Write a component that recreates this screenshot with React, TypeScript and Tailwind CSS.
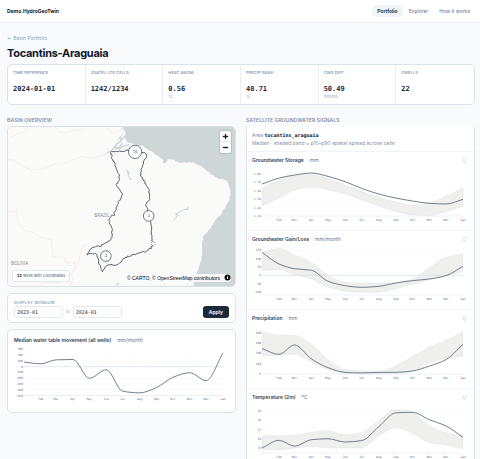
import React from "react";

type Pt = [number, number];

const MONTHS = ["Feb", "Mar", "Apr", "May", "Jun", "Jul", "Aug", "Sep", "Oct", "Nov", "Dec", "Jan"];
const DAYS = [0, 31, 59, 90, 120, 151, 181, 212, 243, 273, 304, 334, 365];

/** Monotone cubic path through the points. */
function curve(pts: Pt[], start = "M"): string {
  const n = pts.length;
  const slope: number[] = [];
  for (let i = 0; i < n - 1; i++) slope.push((pts[i + 1][1] - pts[i][1]) / (pts[i + 1][0] - pts[i][0]));
  const m = pts.map((_, i) => {
    if (i === 0) return slope[0];
    if (i === n - 1) return slope[n - 2];
    const a = slope[i - 1];
    const b = slope[i];
    return a * b <= 0 ? 0 : (2 * a * b) / (a + b);
  });
  let d = `${start}${pts[0][0]} ${pts[0][1]}`;
  for (let i = 0; i < n - 1; i++) {
    const h = (pts[i + 1][0] - pts[i][0]) / 3;
    d += `C${pts[i][0] + h} ${pts[i][1] + m[i] * h} ${pts[i + 1][0] - h} ${pts[i + 1][1] - m[i + 1] * h} ${pts[i + 1][0]} ${pts[i + 1][1]}`;
  }
  return d;
}

interface Series {
  title: string;
  unit: string;
  min: number;
  max: number;
  ticks: [number, string][];
  median: number[];
  upper?: number[];
  lower?: number[];
  zero?: boolean;
}

const axisText = "fill-[#5f7088] font-['DejaVu_Sans_Mono',monospace] text-[3px]";

function Chart({ s }: { s: Series }) {
  const left = 10;
  const right = 211;
  const top = 5;
  const bottom = 52;
  const x = (i: number) => left + (DAYS[i] / 365) * (right - left);
  const y = (v: number) => bottom - ((v - s.min) / (s.max - s.min)) * (bottom - top);
  const pts = (v: number[]): Pt[] => v.map((a, i) => [x(i), y(a)]);
  return (
    <svg viewBox="0 0 217 60" className="mt-px block w-full" role="img" aria-label={s.title}>
      {s.ticks.map(([v, label]) => (
        <g key={label}>
          <line x1={left} x2={right} y1={y(v)} y2={y(v)} stroke="#e8edf3" strokeWidth=".4" strokeDasharray="1 1" />
          <text x={left - 1} y={y(v) + 1} textAnchor="end" className={axisText}>
            {label}
          </text>
        </g>
      ))}
      {s.upper && s.lower && (
        <path d={curve(pts(s.upper)) + curve(pts(s.lower).reverse(), "L") + "Z"} fill="#efefed" stroke="#d0d4d8" strokeWidth=".4" strokeDasharray="1 .7" />
      )}
      {s.zero && <line x1={left} x2={right} y1={y(0)} y2={y(0)} stroke="#d5e0e9" strokeWidth=".7" />}
      <path d={`M${left} ${bottom}H${right}`} stroke="#dde4ec" strokeWidth=".5" />
      <path d={curve(pts(s.median))} fill="none" stroke="#64707f" strokeWidth=".9" />
      {MONTHS.map((m, i) => (
        <g key={m}>
          <line x1={x(i + 1)} x2={x(i + 1)} y1={bottom} y2={bottom + 1} stroke="#dde4ec" strokeWidth=".4" />
          <text x={x(i + 1)} y={bottom + 5} textAnchor="middle" className={axisText}>
            {m}
          </text>
        </g>
      ))}
    </svg>
  );
}

const wells: Series = {
  title: "Median water table movement (all wells)",
  unit: "mm/month",
  min: -500,
  max: 305,
  zero: true,
  ticks: [300, 200, 100, 0, -100, -200, -300, -400, -500].map((v) => [v, String(v)]),
  median: [77, 49, 117, 123, -203, -54, -426, -454, -363, -186, -106, -243, 237],
};

const signals: Series[] = [
  {
    title: "Groundwater Storage",
    unit: "mm",
    min: 1.1,
    max: 1.66,
    ticks: [[1.6, "1.6k"], [1.5, "1.5k"], [1.4, "1.4k"], [1.3, "1.3k"], [1.2, "1.2k"], [1.1, "1.1k"]],
    median: [1.481, 1.552, 1.588, 1.612, 1.572, 1.509, 1.429, 1.362, 1.314, 1.279, 1.251, 1.243, 1.298],
    upper: [1.433, 1.533, 1.576, 1.596, 1.548, 1.473, 1.394, 1.322, 1.267, 1.231, 1.259, 1.334, 1.437],
    lower: [1.219, 1.314, 1.406, 1.445, 1.413, 1.362, 1.29, 1.219, 1.152, 1.112, 1.104, 1.152, 1.215],
  },
  {
    title: "Groundwater Gain/Loss",
    unit: "mm/month",
    min: -118,
    max: 164,
    zero: true,
    ticks: [150, 100, 50, 0, -50, -100].map((v) => [v, String(v)]),
    median: [138, 68, 40, 30, -36, -62, -72, -66, -46, -32, -22, -2, 54],
    upper: [138, 162, 122, 76, 2, -42, -46, -48, -44, -22, 46, 108, 130],
    lower: [28, 34, 4, -22, -72, -94, -102, -102, -80, -54, -26, -2, 24],
  },
  {
    title: "Precipitation",
    unit: "mm",
    min: 0,
    max: 455,
    ticks: [400, 300, 200, 100, 0].map((v) => [v, String(v)]),
    median: [245, 190, 281, 145, 61, 16, 10, 16, 16, 29, 77, 139, 287],
    upper: [410, 377, 375, 287, 139, 45, 29, 26, 81, 171, 261, 326, 406],
    lower: [174, 184, 190, 113, 42, 6, 3, 3, 6, 23, 106, 152, 171],
  },
  {
    title: "Temperature (2m)",
    unit: "°C",
    min: 24.46,
    max: 29.54,
    ticks: [29, 28, 27, 26, 25].map((v) => [v, String(v)]),
    median: [25, 25.83, 25.2, 25.9, 26, 25.65, 25.8, 27.3, 28.8, 28.86, 28.06, 27.38, 26.15],
    upper: [26.33, 26.33, 26.36, 26.7, 26.87, 26.44, 26.7, 28, 29.15, 28.86, 27.4, 26.66, 26.3],
    lower: [24.82, 24.78, 25, 25.14, 25.04, 25, 25.04, 26.3, 27.2, 26.6, 25.58, 25.32, 24.9],
  },
];

const stats = [
  ["TIME REFERENCE", "2024-01-01", ""],
  ["#SATELLITE CELLS", "1242/1234", ""],
  ["HEAT ANOM.", "0.56", "°C"],
  ["PRECIP RANK", "48.71", "%"],
  ["GWS DIFF", "50.49", "mm/mo"],
  ["#WELLS", "22", ""],
];

/** Subdivides a line and shifts the midpoints, for a surveyed look. */
function rough(pts: Pt[], amp: number): string {
  let seed = 7;
  const rnd = () => {
    seed = (seed * 16807) % 2147483647;
    return seed / 2147483647 - 0.5;
  };
  let d = `M${pts[0][0]} ${pts[0][1]}`;
  for (let i = 1; i < pts.length; i++) {
    const [ax, ay] = pts[i - 1];
    const [bx, by] = pts[i];
    const n = Math.max(1, Math.round(Math.hypot(bx - ax, by - ay) / 4));
    for (let k = 1; k <= n; k++) {
      const t = k / n;
      d += `L${(ax + (bx - ax) * t + rnd() * amp).toFixed(1)} ${(ay + (by - ay) * t + rnd() * amp).toFixed(1)}`;
    }
  }
  return d;
}

const basin: Pt[] = [
  [333, 128], [338, 135], [335, 145], [345, 160], [350, 178], [358, 195], [360, 210], [350, 225], [358, 238],
  [368, 252], [365, 265], [358, 275], [352, 290], [346, 305], [345, 318], [335, 318], [330, 330], [332, 345],
  [339, 355], [337, 375], [333, 392], [315, 402], [300, 410], [283, 412], [270, 421], [263, 436], [274, 431],
  [290, 434], [297, 448], [299, 465], [308, 485], [316, 478], [322, 468], [350, 466], [365, 458], [370, 446],
  [395, 438], [420, 430], [440, 426], [455, 416], [461, 403], [457, 392], [457, 370], [454, 345], [448, 320],
  [440, 285], [450, 270], [449, 240], [438, 220], [424, 200], [425, 180], [433, 152], [443, 136], [436, 127],
  [420, 128], [405, 124], [385, 122], [365, 126], [345, 124], [333, 128],
];

const coast: Pt[] = [
  [370, 48], [378, 68], [374, 84], [384, 96], [400, 101], [412, 106], [430, 108], [446, 120], [462, 128], [474, 138],
  [492, 148], [490, 160], [496, 160], [506, 149], [522, 150], [540, 157], [560, 158], [580, 157], [605, 168],
  [622, 182], [640, 196], [655, 206], [680, 210], [688, 222], [695, 245], [691, 270], [680, 292], [665, 315],
  [645, 335], [635, 355], [620, 372], [612, 380], [609, 400], [609, 435], [604, 462], [595, 485], [585, 503],
  [583, 535],
];

function BasinMap() {
  return (
    <svg viewBox="24 51 684 478" preserveAspectRatio="xMidYMid slice" className="block w-full" aria-label="Basin map">
      <rect x="24" y="51" width="684" height="480" fill="#fafaf8" />
      <path d={rough(coast, 3) + "L720 535V40H370Z"} fill="#ced6d8" />
      <g fill="none" stroke="#c9d3d6" strokeLinejoin="round">
        <path d="M322 130L340 118L352 102L366 92L374 78M346 116L360 112L368 98M350 106L345 112L356 118L374 108L390 104M366 90L360 80" strokeWidth="4" />
        <path d="M364 52L374 62M372 70L364 78L356 92M378 120L392 112L404 116M350 134L340 128" strokeWidth="2.5" />
        <path d="M381 178L387 196L391 208L396 209M385 184L390 192" strokeWidth="3" />
        <path d="M522 334L530 324L532 312L544 306L552 300L568 298M532 312L540 320M528 310L534 316M564 300L567 290" strokeWidth="3" />
        <path d="M352 528L355 521L361 526M349 524L356 530" strokeWidth="2.5" />
      </g>
      <path d="M24 149L40 151L60 164L80 175L97 181L130 178L165 162L190 163L215 152L245 140L275 146L300 138L328 130" fill="none" stroke="#e6e9e9" strokeWidth="2" />
      <g fill="none" stroke="#f3e4e4" strokeWidth="1.7" strokeLinejoin="round">
        <path d="M24 70L36 82L52 70L72 66L84 52M168 52L180 66L205 68L222 58L240 62L252 51M322 51L334 66L350 69L364 58" />
        <path d="M24 306L50 304L54 340L72 362L100 369L128 386L154 390L160 442L194 444L198 460L226 460L222 486L206 500L214 530M206 524L190 510L172 520L130 518L120 530" />
        <path d="M226 486L238 452L246 420L250 408L268 403M210 486L220 510L212 528" />
      </g>
      <g className="fill-[#7d878d] font-['Open_Sans',sans-serif] text-[14px]">
        <text x="284" y="321">BRAZIL</text>
        <text x="33" y="467">BOLIVIA</text>
      </g>
      <path d={rough(basin, 4)} fill="none" stroke="#474e61" strokeWidth="2.7" strokeLinejoin="round" />
      <circle cx="461" cy="402" r="6" fill="#fff" stroke="#6b7280" strokeWidth="1.3" />
      {[
        [407, 126, 20, "15"],
        [448, 319, 16, "3"],
        [319, 440, 16, "3"],
      ].map(([cx, cy, r, label], i) => (
        <g key={i}>
          <circle cx={cx} cy={cy} r={r} fill="#fff" stroke="#4b5563" strokeWidth="2.4" />
          <text x={cx} y={Number(cy) + 4} textAnchor="middle" className="fill-slate-700 font-['Inter',sans-serif] text-[12px]">
            {label}
          </text>
        </g>
      ))}
    </svg>
  );
}

function ChartTitle({ s }: { s: Series }) {
  return (
    <h3 className="text-[5px] leading-[6px] font-semibold text-slate-700">
      {s.title} <span className="mx-px font-normal text-slate-400">·</span> <span className="font-normal text-slate-500">{s.unit}</span>
    </h3>
  );
}

const card = "rounded-[5px] border border-[#dbe3ec] bg-white";
const sectionLabel = "text-[5px] leading-[6px] font-semibold tracking-wide text-[#7f90a8]";
const monthField =
  "h-[12px] w-[49px] rounded-[3px] border border-slate-200 bg-white px-[2px] font-['DejaVu_Sans_Mono',monospace] text-[5px] text-slate-800";

export default function App() {
  return (
    <div className="h-screen overflow-hidden bg-slate-50 font-['Inter',sans-serif] text-slate-900">
      <header className="flex h-[23px] items-center justify-between border-b border-slate-200/70 bg-white px-[7px]">
        <a href="#home" className="text-[5px] leading-[6px] font-bold">Demo.HydroGeoTwin</a>
        <nav className="flex gap-px text-[5px] leading-[6px] text-slate-500">
          <a href="#portfolio" className="rounded-sm bg-slate-100 px-[5px] py-[3px] font-semibold text-slate-900">Portfolio</a>
          <a href="#explorer" className="px-[5px] py-[3px]">Explorer</a>
          <a href="#how" className="py-[3px] pr-[3px] pl-[5px]">How it works</a>
        </nav>
      </header>

      <main className="pt-3 pr-[5px] pl-[7px]">
        <a href="#basins" className="block text-[5px] leading-[7px] text-slate-400">← Basin Portfolio</a>
        <h1 className="mt-1 text-[11px] leading-[14px] font-bold tracking-tight">Tocantins-Araguaia</h1>

        <dl className={`mt-1 grid grid-cols-6 divide-x divide-slate-200/70 ${card}`}>
          {stats.map(([label, value, unit]) => (
            <div key={label} className="h-[39px] px-[5px] pt-[5px]">
              <dt className="text-[4px] leading-[5px] font-medium tracking-wide text-[#7f90a8]">{label}</dt>
              <dd className="mt-[10px] font-['DejaVu_Sans_Mono',monospace] text-[7px] leading-[9px] font-bold text-slate-800">{value}</dd>
              <dd className="text-[4px] leading-[5px] text-slate-400">{unit}</dd>
            </div>
          ))}
        </dl>

        <div className="mt-3 grid grid-cols-2 items-start gap-[10px]">
          <section>
            <h2 className={sectionLabel}>BASIN OVERVIEW</h2>
            <div className="relative mt-[3px] overflow-hidden rounded-[5px] border border-[#d9e1e9]">
              <BasinMap />
              <div className="absolute top-1 right-1 flex flex-col rounded-[2px] bg-white shadow-[0_0_0_1px_#0000001a]">
                <button aria-label="Zoom in" className="flex size-[11px] items-center justify-center border-b border-gray-200">
                  <svg viewBox="0 0 10 10" className="size-[7px]"><path d="M5 2v6M2 5h6" stroke="#222" strokeWidth="1.8" strokeLinecap="round" /></svg>
                </button>
                <button aria-label="Zoom out" className="flex size-[11px] items-center justify-center">
                  <svg viewBox="0 0 10 10" className="size-[7px]"><path d="M2 5h6" stroke="#222" strokeWidth="1.8" strokeLinecap="round" /></svg>
                </button>
              </div>
              <div className="absolute bottom-1 left-1 rounded-[3px] border border-slate-200 bg-white px-1 py-[2px] text-[4px] leading-[6px] text-slate-600">
                <b className="font-semibold text-slate-900">22</b> wells with coordinates
              </div>
              <div className="absolute right-1 bottom-1 flex items-center gap-1 rounded-full bg-white/80 pl-[3px] font-['Liberation_Sans',sans-serif] text-[5px] leading-[8px] text-black">
                <span>© <a href="#carto">CARTO</a>, © <a href="#osm">OpenStreetMap</a> contributors</span>
                <button aria-label="Attribution" className="size-[7px]">
                  <svg viewBox="0 0 14 14" className="block w-full">
                    <circle cx="7" cy="7" r="6" fill="#111" />
                    <path d="M7 6v4M7 3.5v1.4" stroke="#fff" strokeWidth="1.8" />
                  </svg>
                </button>
              </div>
            </div>

            <form className={`mt-[6px] px-[6px] pt-[5px] pb-1 ${card}`} onSubmit={(e) => e.preventDefault()}>
              <p className="text-[4px] leading-[7px] tracking-widest text-slate-500">DISPLAY WINDOW</p>
              <div className="flex items-center gap-[3px] text-[4px] leading-[6px] text-slate-400">
                <input aria-label="From" defaultValue="2023-01" className={monthField} />
                to
                <input aria-label="To" defaultValue="2024-01" className={monthField} />
                <button className="ml-auto h-[12px] rounded-[3px] bg-slate-800 px-[6px] text-[5px] font-semibold text-white">Apply</button>
              </div>
            </form>

            <div className={`mt-[6px] px-[6px] pt-[7px] pb-[9px] ${card}`}>
              <ChartTitle s={wells} />
              <Chart s={wells} />
            </div>
          </section>

          <section>
            <h2 className={sectionLabel}>SATELLITE GROUNDWATER SIGNALS</h2>
            <div className="mt-[3px] divide-y divide-slate-100 border-x border-[#dbe3ec] bg-white">
              <div className="px-[5px] pt-[5px] pb-1 text-[5px] leading-[8px] text-[#7f90a8]">
                <p>Area <b className="font-['DejaVu_Sans_Mono',monospace] text-slate-900">tocantins_araguaia</b></p>
                <p>Median · shaded band = p10–p90 spatial spread across cells</p>
              </div>
              {signals.map((s) => (
                <article key={s.title} className="px-[5px] pt-[5px] pb-[6px]">
                  <div className="flex items-center justify-between pr-[2px]">
                    <ChartTitle s={s} />
                    <button aria-label={`About ${s.title}`} className="size-[5px]">
                      <svg viewBox="0 0 12 14" className="block size-full" fill="none" stroke="#c2ccd9" strokeWidth="1.5">
                        <rect x="2" y="1" width="8" height="10" rx="3" />
                        <path d="M4 13h4" />
                      </svg>
                    </button>
                  </div>
                  <Chart s={s} />
                </article>
              ))}
            </div>
          </section>
        </div>
      </main>
    </div>
  );
}
